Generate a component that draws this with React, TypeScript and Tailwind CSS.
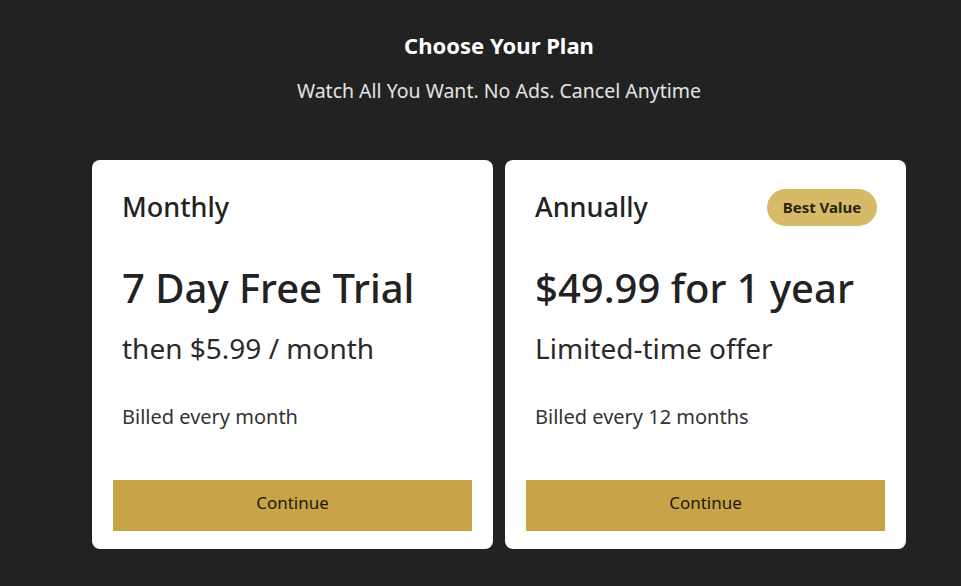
export default function App() {
  return (
    <div className="min-h-[586px] w-full bg-[#222222] font-['Noto_Sans',sans-serif]">
      <div className="ml-[92px] w-[814px] pt-[30px]">
        <h1 className="text-center text-[22px] font-bold leading-[30px] text-white">Choose Your Plan</h1>
        <p className="mt-[16px] text-center text-[19.5px] leading-[30px] text-[#e4e4e4]">
          Watch All You Want. No Ads. Cancel Anytime
        </p>

        <div className="mt-[54px] grid grid-cols-2 gap-[12px]">
          <PlanCard
            title="Monthly"
            headline="7 Day Free Trial"
            sub="then $5.99 / month"
            billing="Billed every month"
          />
          <PlanCard
            title="Annually"
            headline="$49.99 for 1 year"
            sub="Limited-time offer"
            billing="Billed every 12 months"
            badge="Best Value"
          />
        </div>
      </div>
    </div>
  );
}

function PlanCard({
  title,
  headline,
  sub,
  billing,
  badge,
}: {
  title: string;
  headline: string;
  sub: string;
  billing: string;
  badge?: string;
}) {
  return (
    <div className="flex h-[389px] flex-col rounded-[8px] bg-white px-[21px] pb-[18px] pt-[29px] text-[#222222]">
      <div className="flex h-[37px] items-center justify-between pl-[9px] pr-[8px]">
        <span className="text-[27px] font-medium">{title}</span>
        {badge && (
          <span className="flex h-[37px] w-[110px] items-center justify-center rounded-full bg-[#d6ba68] text-[15px] font-bold text-[#2a2410]">
            {badge}
          </span>
        )}
      </div>
      <div className="mt-[36px] pl-[9px] text-[40px] font-medium leading-[52px]">{headline}</div>
      <div className="mt-[16px] pl-[9px] text-[28px] leading-[36px] text-[#2a2a2a]">{sub}</div>
      <div className="mt-[37px] pl-[9px] text-[20px] leading-[28px] text-[#333333]">{billing}</div>
      <button className="mt-auto h-[51px] w-full bg-[#c8a348] pb-[5px] text-[17px] text-[#1f1a0c]">Continue</button>
    </div>
  );
}
